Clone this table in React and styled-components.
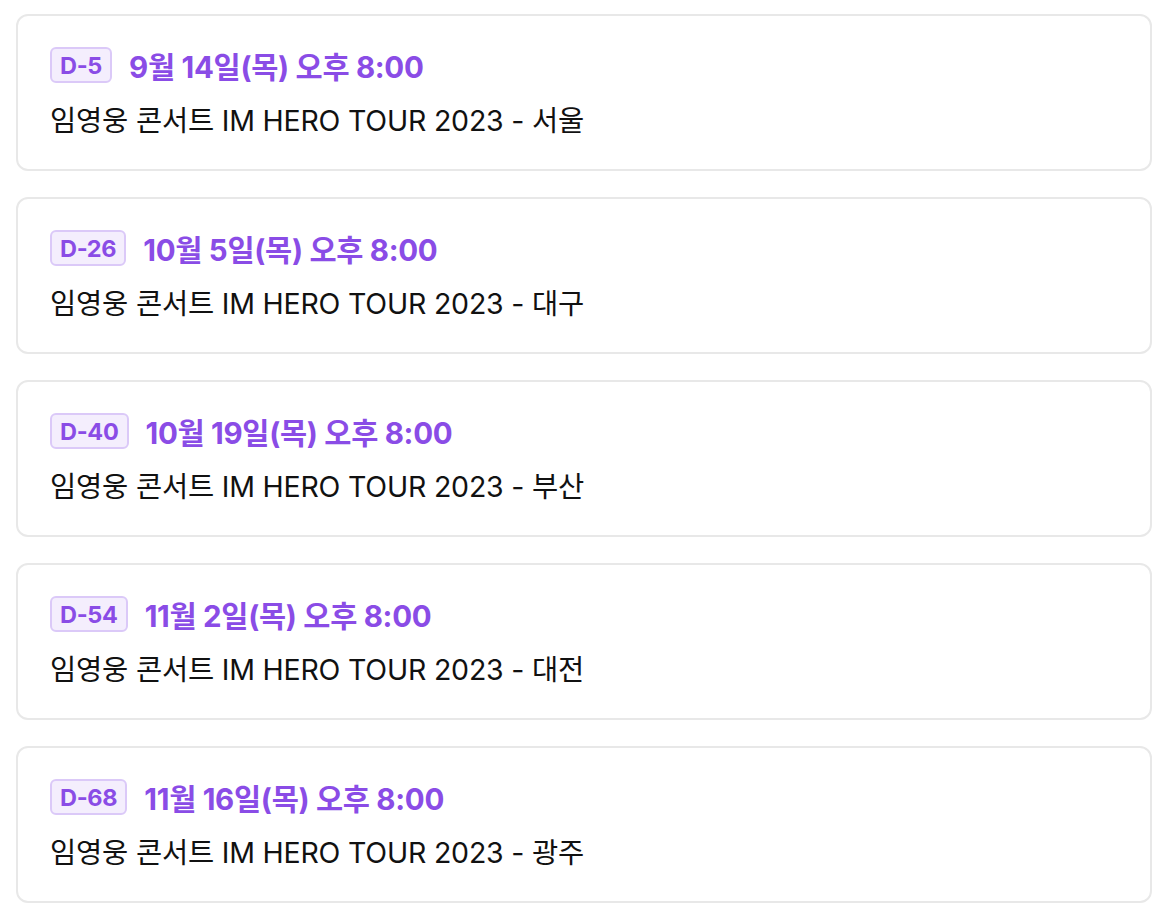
import React from "react";
import styled, { createGlobalStyle } from "styled-components";

const GlobalStyle = createGlobalStyle`
  body {
    margin: 0;
    background: #ffffff;
    font-family: Inter, "Noto Sans CJK KR", sans-serif;
  }
`;

const List = styled.div`
  display: flex;
  flex-direction: column;
  gap: 26px;
  padding: 14px 12px 14px 16px;
`;

const Card = styled.div`
  display: flex;
  flex-direction: column;
  gap: 20px;
  padding: 31px 32px 30px 32px;
  border: 2px solid #e8e8e8;
  border-radius: 12px;
  background: #fff;
`;

const Header = styled.div`
  display: flex;
  align-items: center;
  gap: 17px;
  height: 36px;
`;

const Badge = styled.span`
  display: inline-flex;
  align-items: center;
  justify-content: center;
  height: 36px;
  padding: 0 8px;
  box-sizing: border-box;
  border: 2px solid #dbc9f8;
  border-radius: 6px;
  background: #f4eefd;
  color: #8a4ce6;
  font-size: 23.5px;
  font-weight: 700;
  letter-spacing: -0.3px;
`;

const DateText = styled.span`
  color: #8a4ce6;
  font-size: 29.5px;
  font-weight: 700;
  letter-spacing: -0.3px;
`;

const Title = styled.div`
  height: 36px;
  line-height: 36px;
  color: #111;
  font-size: 28.5px;
  font-weight: 400;
  letter-spacing: -0.2px;
`;

const concerts = [
  { dday: "D-5", date: "9월 14일(목) 오후 8:00", city: "서울" },
  { dday: "D-26", date: "10월 5일(목) 오후 8:00", city: "대구" },
  { dday: "D-40", date: "10월 19일(목) 오후 8:00", city: "부산" },
  { dday: "D-54", date: "11월 2일(목) 오후 8:00", city: "대전" },
  { dday: "D-68", date: "11월 16일(목) 오후 8:00", city: "광주" },
];

export default function App() {
  return (
    <>
      <GlobalStyle />
      <List>
        {concerts.map((c) => (
          <Card key={c.dday}>
            <Header>
              <Badge>{c.dday}</Badge>
              <DateText>{c.date}</DateText>
            </Header>
            <Title>임영웅 콘서트 IM HERO TOUR 2023 - {c.city}</Title>
          </Card>
        ))}
      </List>
    </>
  );
}
